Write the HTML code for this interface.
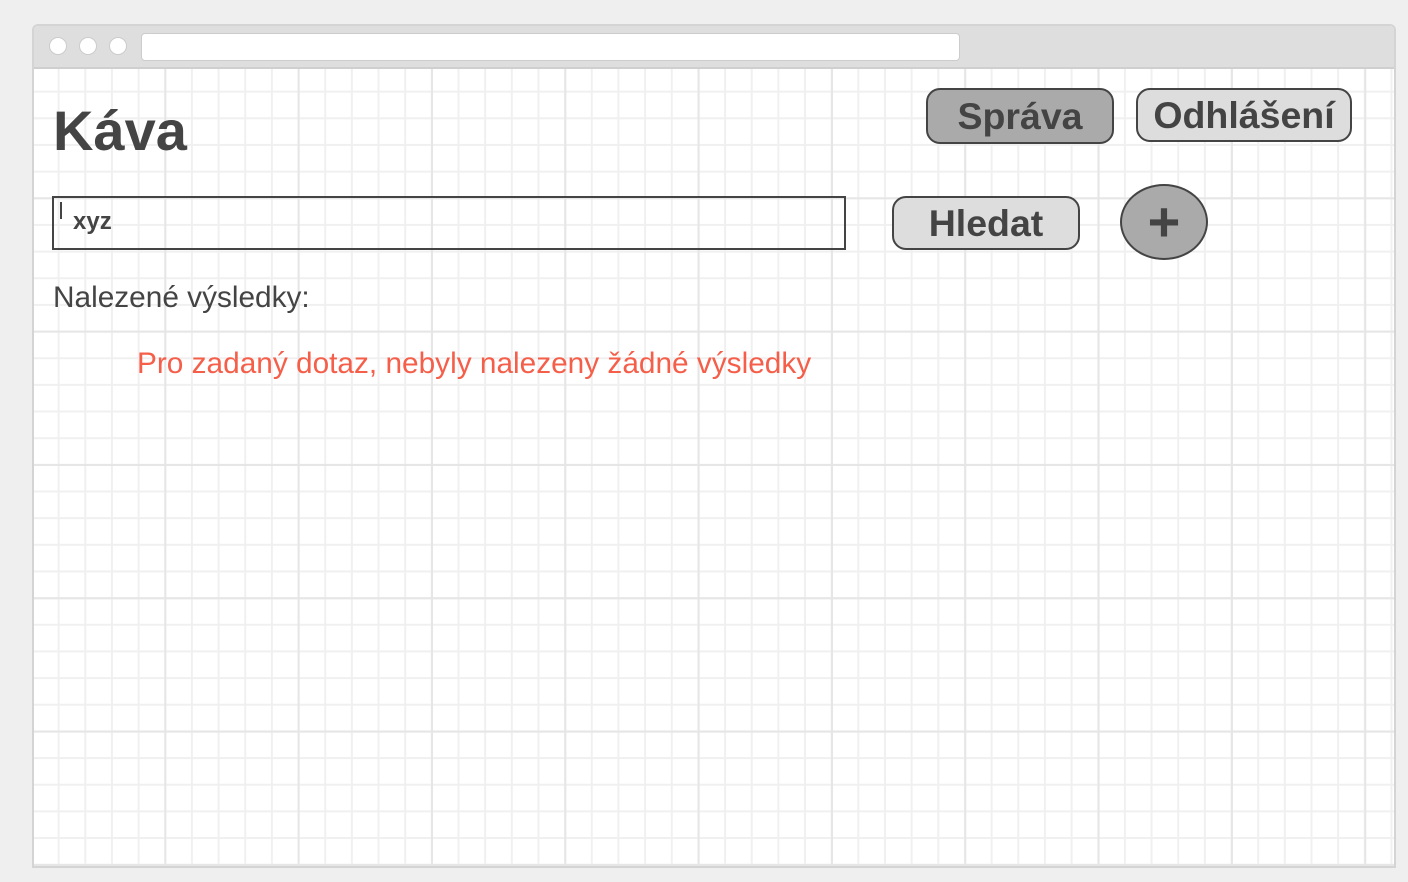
<!DOCTYPE html>
<html><head><meta charset="utf-8"><style>
body{margin:0;width:1408px;height:882px;background:#efefef;position:relative;overflow:hidden;font-family:"Liberation Sans",sans-serif;color:#444}
.frame{position:absolute;left:32px;top:24px;width:1360px;height:840px;border:2px solid #d4d4d4;border-radius:6px 6px 0 0;background:#fff;overflow:hidden}
.bar{position:absolute;left:0;top:0;width:100%;height:41px;background:#dedede;border-bottom:2px solid #cfcfcf}
.dot{position:absolute;top:11px;width:16px;height:16px;border-radius:50%;background:#fff;border:1px solid #ccc}
.url{position:absolute;left:107px;top:7px;width:817px;height:26px;background:#fff;border:1px solid #ccc;border-radius:4px}
.grid{position:absolute;left:0;top:43px;width:100%;height:800px;
background-image:
linear-gradient(to right,#e6e6e6 2px,transparent 2px),
linear-gradient(to bottom,#e6e6e6 2px,transparent 2px),
linear-gradient(to right,#f0f0f0 2px,transparent 2px),
linear-gradient(to bottom,#f0f0f0 2px,transparent 2px);
background-size:133.33px 133.33px,133.33px 133.33px,26.667px 26.667px,26.667px 26.667px;
background-position:-3px -5px,-3px -5px,-3px -5px,-3px -5px}
.abs{position:absolute}
.btn{position:absolute;border:2px solid #444;border-radius:14px;font-weight:bold;text-align:center;box-sizing:border-box;font-size:37.5px}
</style></head><body>
<div class="frame">
<div class="bar"><div class="dot" style="left:15px"></div><div class="dot" style="left:45px"></div><div class="dot" style="left:75px"></div><div class="url"></div></div>
<div class="grid"></div>
</div>
<div class="abs" style="left:53px;top:100px;font-size:56px;font-weight:bold;line-height:62px">Káva</div>
<div class="btn" style="left:926px;top:88px;width:188px;height:56px;background:#aaa;line-height:52px">Správa</div>
<div class="btn" style="left:1136px;top:88px;width:216px;height:54px;background:#ddd;line-height:50px">Odhlášení</div>
<div class="abs" style="left:52px;top:196px;width:794px;height:54px;box-sizing:border-box;border:2px solid #444;background:transparent"></div>
<div class="abs" style="left:60px;top:202px;width:2px;height:17px;background:#444"></div>
<div class="abs" style="left:73px;top:209px;font-size:24px;font-weight:bold;line-height:26px">xyz</div>
<div class="btn" style="left:892px;top:196px;width:188px;height:54px;background:#ddd;line-height:50px">Hledat</div>
<div class="abs" style="left:1120px;top:184px;width:88px;height:76px;box-sizing:border-box;border:2px solid #444;border-radius:50%;background:#aaa;text-align:center;font-size:56px;font-weight:bold;line-height:72px">+</div>
<div class="abs" style="left:53px;top:281px;font-size:29.8px;line-height:34px">Nalezené výsledky:</div>
<div class="abs" style="left:137px;top:347px;font-size:29.8px;line-height:34px;color:#f55f4a">Pro zadaný dotaz, nebyly nalezeny žádné výsledky</div>
</body></html>
